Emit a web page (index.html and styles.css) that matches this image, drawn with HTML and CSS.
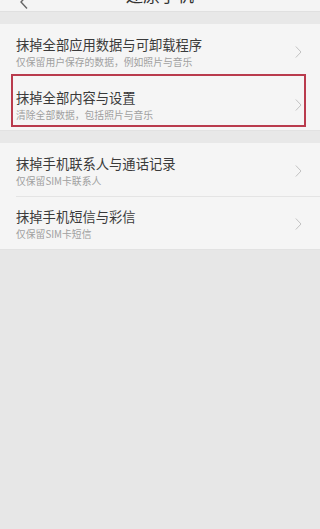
FILE: index.html
```html
<!DOCTYPE html>
<html lang="zh-CN">
<head>
    <meta charset="UTF-8">
    <meta name="viewport" content="width=device-width, initial-scale=1.0">
    <title>还原手机</title>
    <link rel="stylesheet" href="styles.css">
</head>
<body>
    <div class="header">
        <span class="back">
            <svg width="8" height="14" viewBox="0 0 8 14"><path d="M7 0.5 L1 7 L7 13.5" fill="none" stroke="#666" stroke-width="1.4"/></svg>
        </span>
        <span class="title">还原手机</span>
    </div>

    <div class="gap"></div>

    <div class="group">
        <div class="item">
            <div class="text">
                <div class="item-title">抹掉全部应用数据与可卸载程序</div>
                <div class="item-sub">仅保留用户保存的数据，例如照片与音乐</div>
            </div>
            <svg class="chevron" width="7" height="12" viewBox="0 0 7 12"><path d="M0.8 0.5 L6 6 L0.8 11.5" fill="none" stroke="#c2c2c2" stroke-width="1"/></svg>
        </div>
        <div class="item marked">
            <div class="text">
                <div class="item-title">抹掉全部内容与设置</div>
                <div class="item-sub">清除全部数据，包括照片与音乐</div>
            </div>
            <svg class="chevron" width="7" height="12" viewBox="0 0 7 12"><path d="M0.8 0.5 L6 6 L0.8 11.5" fill="none" stroke="#c2c2c2" stroke-width="1"/></svg>
            <div class="highlight"></div>
        </div>
    </div>

    <div class="gap"></div>

    <div class="group">
        <div class="item">
            <div class="text">
                <div class="item-title">抹掉手机联系人与通话记录</div>
                <div class="item-sub">仅保留SIM卡联系人</div>
            </div>
            <svg class="chevron" width="7" height="12" viewBox="0 0 7 12"><path d="M0.8 0.5 L6 6 L0.8 11.5" fill="none" stroke="#c2c2c2" stroke-width="1"/></svg>
        </div>
        <div class="item divided">
            <div class="text">
                <div class="item-title">抹掉手机短信与彩信</div>
                <div class="item-sub">仅保留SIM卡短信</div>
            </div>
            <svg class="chevron" width="7" height="12" viewBox="0 0 7 12"><path d="M0.8 0.5 L6 6 L0.8 11.5" fill="none" stroke="#c2c2c2" stroke-width="1"/></svg>
        </div>
    </div>
</body>
</html>
```

FILE: styles.css
```css
body {
    margin: 0;
    background-color: #e7e7e7;
    font-family: "Noto Sans CJK SC", "Noto Sans", sans-serif;
    color: #333;
}
.header {
    height: 11px;
    overflow: hidden;
    background-color: #f4f4f4;
    border-bottom: 1px solid #e0e0e0;
    position: relative;
    display: flex;
    justify-content: center;
}
.back {
    position: absolute;
    left: 20px;
    top: -10px;
}
.title {
    display: block;
    margin-top: -15px;
    font-size: 17px;
    line-height: 20px;
    color: #333;
}
.gap {
    height: 12px;
    background-color: #e8e8e8;
}
.group {
    background-color: #f5f5f5;
    border-bottom: 1px solid #e2e2e2;
}
.item {
    position: relative;
    height: 53px;
    display: flex;
    align-items: flex-start;
    padding: 12px 18px 0 16px;
    box-sizing: border-box;
}
.item.divided::before {
    content: "";
    position: absolute;
    left: 16px;
    right: 0;
    top: 0;
    border-top: 1px solid #e4e4e4;
}
.text {
    flex: 1;
}
.item-title {
    font-size: 13.3px;
    line-height: 18px;
    color: #3a3a3a;
}
.item-sub {
    margin-top: 2px;
    font-size: 9.8px;
    line-height: 12px;
    color: #a0a0a0;
}
.chevron {
    margin-top: 10px;
}
.highlight {
    position: absolute;
    top: -3px;
    bottom: 3px;
    left: 11px;
    right: 14px;
    border: 2px solid #b93b4d;
}
```
